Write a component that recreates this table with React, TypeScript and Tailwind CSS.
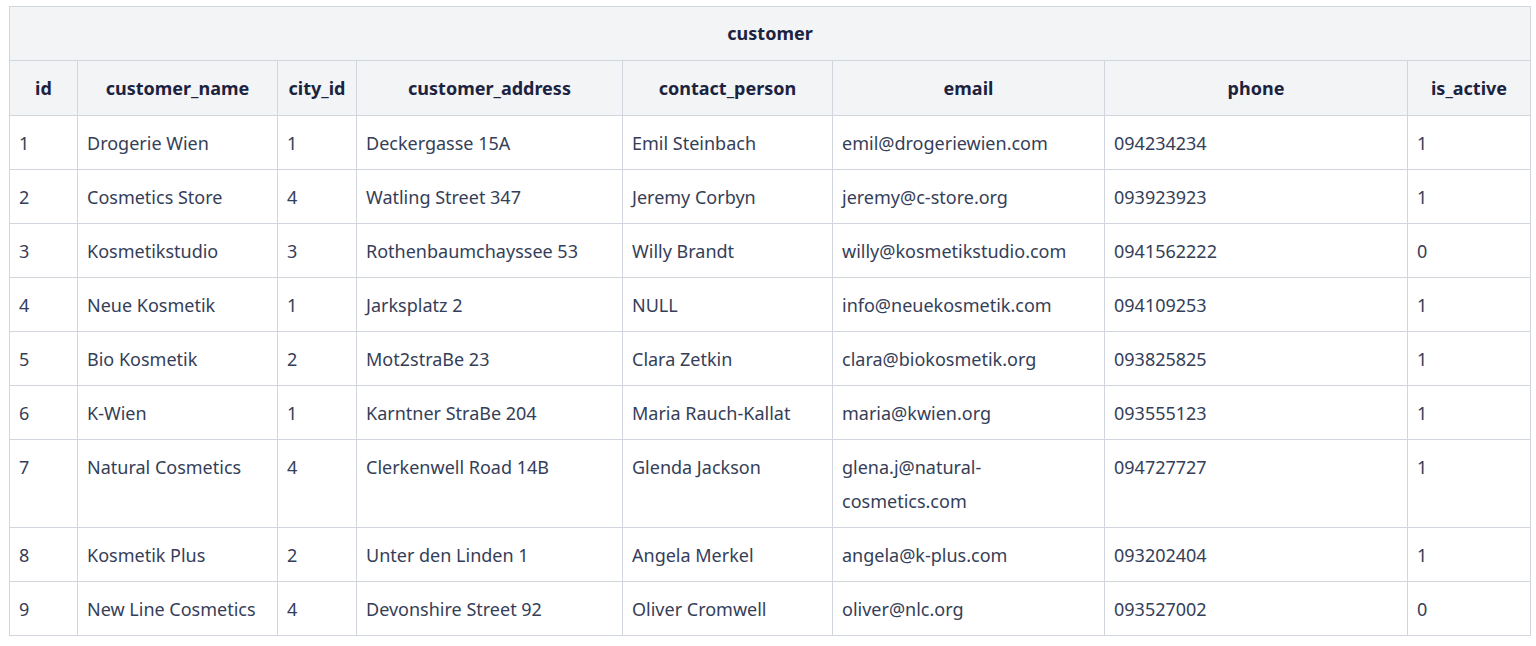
import React from "react";

type Customer = {
  id: number;
  name: string;
  cityId: number;
  address: string;
  contact: string;
  email: string;
  phone: string;
  active: number;
};

const customers: Customer[] = [
  { id: 1, name: "Drogerie Wien", cityId: 1, address: "Deckergasse 15A", contact: "Emil Steinbach", email: "emil@drogeriewien.com", phone: "094234234", active: 1 },
  { id: 2, name: "Cosmetics Store", cityId: 4, address: "Watling Street 347", contact: "Jeremy Corbyn", email: "jeremy@c-store.org", phone: "093923923", active: 1 },
  { id: 3, name: "Kosmetikstudio", cityId: 3, address: "Rothenbaumchayssee 53", contact: "Willy Brandt", email: "willy@kosmetikstudio.com", phone: "0941562222", active: 0 },
  { id: 4, name: "Neue Kosmetik", cityId: 1, address: "Jarksplatz 2", contact: "NULL", email: "info@neuekosmetik.com", phone: "094109253", active: 1 },
  { id: 5, name: "Bio Kosmetik", cityId: 2, address: "Mot2straBe 23", contact: "Clara Zetkin", email: "clara@biokosmetik.org", phone: "093825825", active: 1 },
  { id: 6, name: "K-Wien", cityId: 1, address: "Karntner StraBe 204", contact: "Maria Rauch-Kallat", email: "maria@kwien.org", phone: "093555123", active: 1 },
  { id: 7, name: "Natural Cosmetics", cityId: 4, address: "Clerkenwell Road 14B", contact: "Glenda Jackson", email: "glena.j@natural-cosmetics.com", phone: "094727727", active: 1 },
  { id: 8, name: "Kosmetik Plus", cityId: 2, address: "Unter den Linden 1", contact: "Angela Merkel", email: "angela@k-plus.com", phone: "093202404", active: 1 },
  { id: 9, name: "New Line Cosmetics", cityId: 4, address: "Devonshire Street 92", contact: "Oliver Cromwell", email: "oliver@nlc.org", phone: "093527002", active: 0 },
];

const headers = [
  "id",
  "customer_name",
  "city_id",
  "customer_address",
  "contact_person",
  "email",
  "phone",
  "is_active",
];

const th = "border border-[#d0d5de] px-[10px] h-[55px] text-center font-bold text-[#1b2340]";
const td = "border border-[#d0d5de] pl-[9px] pr-[10px] pt-[10px] pb-[9px] align-top leading-[34px]";

export default function App() {
  return (
    <div className="bg-white min-h-screen pl-[9px] pt-[6px] font-['Noto_Sans',sans-serif]">
      <table className="table-fixed border-collapse w-[1521px] text-[18px] text-[#353e58]">
        <colgroup>
          <col className="w-[68px]" />
          <col className="w-[200px]" />
          <col className="w-[79px]" />
          <col className="w-[266px]" />
          <col className="w-[210px]" />
          <col className="w-[272px]" />
          <col className="w-[303px]" />
          <col className="w-[123px]" />
        </colgroup>
        <thead className="bg-[#f3f4f6]">
          <tr>
            <th colSpan={8} className="border border-[#d0d5de] h-[54px] pb-[1px] text-center font-bold text-[#1b2340]">
              customer
            </th>
          </tr>
          <tr>
            {headers.map((h) => (
              <th key={h} className={th}>
                {h}
              </th>
            ))}
          </tr>
        </thead>
        <tbody>
          {customers.map((c) => (
            <tr key={c.id}>
              <td className={td}>{c.id}</td>
              <td className={td}>{c.name}</td>
              <td className={td}>{c.cityId}</td>
              <td className={td}>{c.address}</td>
              <td className={td}>{c.contact}</td>
              <td className={td}>
                {c.email.includes("natural-") ? (
                  <>
                    glena.j@natural-
                    <br />
                    cosmetics.com
                  </>
                ) : (
                  c.email
                )}
              </td>
              <td className={td}>{c.phone}</td>
              <td className={td}>{c.active}</td>
            </tr>
          ))}
        </tbody>
      </table>
    </div>
  );
}
